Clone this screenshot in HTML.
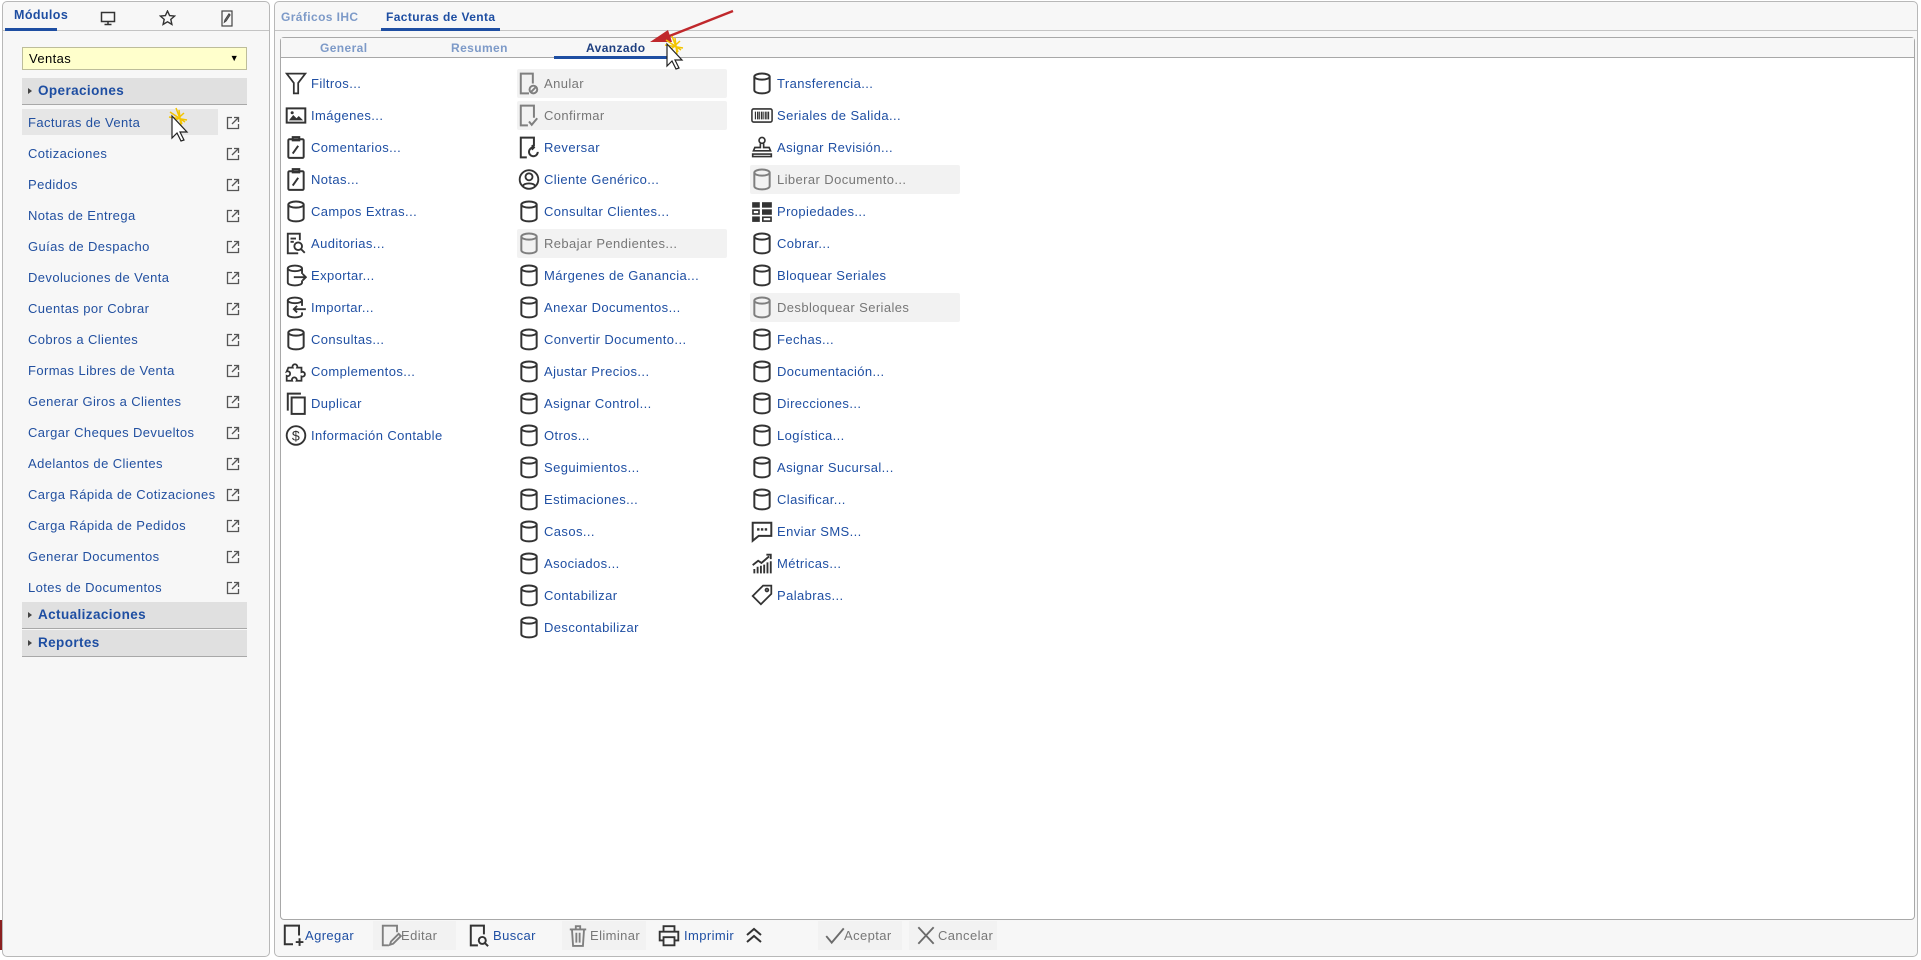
<!DOCTYPE html>
<html><head><meta charset="utf-8"><style>
*{box-sizing:border-box;margin:0;padding:0}
body{width:1921px;height:960px;background:#fff;font-family:"Liberation Sans",sans-serif;font-size:13px;letter-spacing:0.4px;color:#1f4fa3;position:relative;overflow:hidden}
.a{position:absolute}
.lp{left:2px;top:1px;width:268px;height:956px;border:1px solid #b8b8b8;border-radius:5px;background:#f7f7f7}
.rp{left:274px;top:1px;width:1644px;height:956px;border:1px solid #b8b8b8;border-radius:5px;background:#f7f7f7}
.tabline{height:1px;background:#c4c4c4}
.item{position:absolute;left:28px;height:20px;line-height:20px;color:#2250a0}
.ext{position:absolute;left:226px;width:14px;height:14px}
.hdr{position:absolute;left:22px;width:225px;height:27px;background:#e0e0e0;border-bottom:1px solid #a8a8a8;font-weight:bold;color:#1e4ea2;line-height:26px;padding-left:16px;font-size:13.5px}
.hdr:before{content:"";position:absolute;left:6px;top:10px;border-left:4px solid #444;border-top:3.5px solid transparent;border-bottom:3.5px solid transparent}
.op{position:absolute;height:29px;line-height:29px;white-space:nowrap}
.op svg{position:absolute;left:1px;top:3px;width:22px;height:23px}
.op span{position:absolute;left:27px}
.dis{background:#f2f2f2;border-radius:2px;color:#777}
.dis svg{opacity:.6}
.ft{position:absolute;top:921px;height:29px;line-height:29px;white-space:nowrap}
.ft svg{position:absolute;top:3px;width:22px;height:23px}
</style></head><body>
<svg width="0" height="0" style="position:absolute">
<defs>
<symbol id="db" viewBox="0 0 20 21"><g fill="none" stroke="#333" stroke-width="1.8"><ellipse cx="10" cy="4.2" rx="7" ry="2.8"/><path d="M3 4.2v12.5c0 1.6 3.1 2.8 7 2.8s7-1.2 7-2.8V4.2"/></g></symbol>
<symbol id="ext" viewBox="0 0 14 14"><g fill="none" stroke="#555" stroke-width="1.3"><path d="M6 1.5H1.5v11h11V8"/><path d="M8 1.5h4.5V6M12.5 1.5 6 8"/></g></symbol>
</defs></svg>

<!-- LEFT PANEL -->
<div class="a lp"></div>
<div class="a tabline" style="left:3px;top:30px;width:266px"></div>
<div class="a" style="left:14px;top:8px;font-weight:bold;font-size:12.5px;color:#1e4ea2">Módulos</div>
<div class="a" style="left:5px;top:28px;width:52px;height:3px;background:#1e4ea2"></div>
<svg class="a" style="left:100px;top:11px" width="16" height="15" viewBox="0 0 16 15"><g fill="none" stroke="#333" stroke-width="1.5"><rect x="1.5" y="1.5" width="13" height="9"/><path d="M8 10.5v3M4.5 13.5h7"/></g></svg>
<svg class="a" style="left:159px;top:10px" width="17" height="16" viewBox="0 0 17 16"><path d="M8.5 1l2.1 4.6 5 .5-3.8 3.3 1.1 5-4.4-2.6-4.4 2.6 1.1-5L1.4 6.1l5-.5z" fill="none" stroke="#333" stroke-width="1.4"/></svg>
<svg class="a" style="left:221px;top:10px" width="12" height="17" viewBox="0 0 12 17"><g fill="none" stroke="#444" stroke-width="1.2"><rect x="1" y="1" width="10" height="15"/><path d="M8 4 4 10l-.5 2 1.6-1.2L9 5z"/></g></svg>

<div class="a" style="left:22px;top:47px;width:225px;height:23px;background:#ffffcc;border:1px solid #bdbd9a;line-height:21px;padding-left:6px;color:#000;font-size:13px">Ventas<span style="position:absolute;right:7px;top:0;font-size:9px">▼</span></div>
<div class="hdr" style="top:78px">Operaciones</div>
<div class="a" style="left:22px;top:109px;width:196px;height:26px;background:#e6e6e6"></div>
<div class="item" style="top:113px">Facturas de Venta</div>
<div class="item" style="top:144px">Cotizaciones</div>
<div class="item" style="top:175px">Pedidos</div>
<div class="item" style="top:206px">Notas de Entrega</div>
<div class="item" style="top:237px">Guías de Despacho</div>
<div class="item" style="top:268px">Devoluciones de Venta</div>
<div class="item" style="top:299px">Cuentas por Cobrar</div>
<div class="item" style="top:330px">Cobros a Clientes</div>
<div class="item" style="top:361px">Formas Libres de Venta</div>
<div class="item" style="top:392px">Generar Giros a Clientes</div>
<div class="item" style="top:423px">Cargar Cheques Devueltos</div>
<div class="item" style="top:454px">Adelantos de Clientes</div>
<div class="item" style="top:485px;width:192px;overflow:hidden;white-space:nowrap">Carga Rápida de Cotizaciones</div>
<div class="item" style="top:516px">Carga Rápida de Pedidos</div>
<div class="item" style="top:547px">Generar Documentos</div>
<div class="item" style="top:578px">Lotes de Documentos</div>
<svg class="ext" style="top:116px"><use href="#ext"/></svg>
<svg class="ext" style="top:147px"><use href="#ext"/></svg>
<svg class="ext" style="top:178px"><use href="#ext"/></svg>
<svg class="ext" style="top:209px"><use href="#ext"/></svg>
<svg class="ext" style="top:240px"><use href="#ext"/></svg>
<svg class="ext" style="top:271px"><use href="#ext"/></svg>
<svg class="ext" style="top:302px"><use href="#ext"/></svg>
<svg class="ext" style="top:333px"><use href="#ext"/></svg>
<svg class="ext" style="top:364px"><use href="#ext"/></svg>
<svg class="ext" style="top:395px"><use href="#ext"/></svg>
<svg class="ext" style="top:426px"><use href="#ext"/></svg>
<svg class="ext" style="top:457px"><use href="#ext"/></svg>
<svg class="ext" style="top:488px"><use href="#ext"/></svg>
<svg class="ext" style="top:519px"><use href="#ext"/></svg>
<svg class="ext" style="top:550px"><use href="#ext"/></svg>
<svg class="ext" style="top:581px"><use href="#ext"/></svg>
<div class="hdr" style="top:602px">Actualizaciones</div>
<div class="hdr" style="top:630px">Reportes</div>
<div class="a" style="left:0;top:920px;width:2px;height:30px;background:#8b2020"></div>

<!-- RIGHT PANEL -->
<div class="a rp"></div>
<div class="a tabline" style="left:275px;top:30px;width:1642px"></div>
<div class="a" style="left:281px;top:10px;font-weight:bold;font-size:12px;color:#7d9ac8">Gráficos IHC</div>
<div class="a" style="left:386px;top:10px;font-weight:bold;font-size:12px;color:#1e4ea2">Facturas de Venta</div>
<div class="a" style="left:381px;top:28px;width:119px;height:3px;background:#1e4ea2"></div>

<div class="a" style="left:280px;top:37px;width:1635px;height:883px;border:1px solid #a8a8a8;border-radius:4px;background:#fff"></div>
<div class="a" style="left:281px;top:38px;width:1633px;height:20px;background:#f7f7f7;border-bottom:1px solid #a8a8a8"></div>
<div class="a" style="left:320px;top:41px;font-weight:bold;font-size:12px;color:#7d9ac8">General</div>
<div class="a" style="left:451px;top:41px;font-weight:bold;font-size:12px;color:#7d9ac8">Resumen</div>
<div class="a" style="left:586px;top:41px;font-weight:bold;font-size:12px;color:#1e3f80">Avanzado</div>
<div class="a" style="left:554px;top:56px;width:115px;height:3px;background:#1e4ea2"></div>

<!-- column 1 -->
<div class="op" style="left:284px;top:69px"><svg viewBox="0 0 20 21"><path d="M1.5 1.5h17l-6.5 8.5v9.5H8V10z" fill="none" stroke="#333" stroke-width="1.6"/></svg><span>Filtros...</span></div>
<div class="op" style="left:284px;top:101px"><svg viewBox="0 0 20 21"><rect x="1.5" y="4" width="17" height="13" fill="none" stroke="#333" stroke-width="1.8"/><path d="M3.5 15l4-5 3 3 2-2 4 4z" fill="#333"/><circle cx="6.5" cy="8" r="1.4" fill="#333"/></svg><span>Imágenes...</span></div>
<div class="op" style="left:284px;top:133px"><svg viewBox="0 0 20 21"><g fill="none" stroke="#333" stroke-width="1.8"><rect x="3" y="3" width="14" height="17" rx="1"/><rect x="7" y="1" width="6" height="3"/><path d="M7 16l5-7"/></g></svg><span>Comentarios...</span></div>
<div class="op" style="left:284px;top:165px"><svg viewBox="0 0 20 21"><g fill="none" stroke="#333" stroke-width="1.8"><rect x="3" y="3" width="14" height="17" rx="1"/><rect x="7" y="1" width="6" height="3"/><path d="M7 16l5-7"/></g></svg><span>Notas...</span></div>
<div class="op" style="left:284px;top:197px"><svg><use href="#db"/></svg><span>Campos Extras...</span></div>
<div class="op" style="left:284px;top:229px"><svg viewBox="0 0 20 21"><g fill="none" stroke="#333" stroke-width="1.7"><path d="M12 19.5H2.5V1.5h11v6"/><circle cx="12" cy="13" r="3.5"/><path d="M14.5 15.5l3.5 3.5M5 6h5M5 9h3"/></g></svg><span>Auditorias...</span></div>
<div class="op" style="left:284px;top:261px"><svg viewBox="0 0 20 21"><g fill="none" stroke="#333" stroke-width="1.7"><ellipse cx="9" cy="4" rx="6.5" ry="2.6"/><path d="M2.5 4v13c0 1.5 2.9 2.6 6.5 2.6s6.5-1.1 6.5-2.6v-2M15.5 4v5M8 12h11M16 9l3 3-3 3"/></g></svg><span>Exportar...</span></div>
<div class="op" style="left:284px;top:293px"><svg viewBox="0 0 20 21"><g fill="none" stroke="#333" stroke-width="1.7"><ellipse cx="9" cy="4" rx="6.5" ry="2.6"/><path d="M2.5 4v13c0 1.5 2.9 2.6 6.5 2.6s6.5-1.1 6.5-2.6v-2M15.5 4v5M8 12h11M11 9l-3 3 3 3"/></g></svg><span>Importar...</span></div>
<div class="op" style="left:284px;top:325px"><svg><use href="#db"/></svg><span>Consultas...</span></div>
<div class="op" style="left:284px;top:357px"><svg viewBox="0 0 20 21"><path d="M3 7h4a2.2 2.2 0 1 1 4 0h4v4a2.2 2.2 0 1 1 0 4v4h-4.5a2.2 2.2 0 1 0-4 0H1.5v-4.5a2.2 2.2 0 1 0 0-4z" fill="none" stroke="#333" stroke-width="1.6"/></svg><span>Complementos...</span></div>
<div class="op" style="left:284px;top:389px"><svg viewBox="0 0 20 21"><g fill="none" stroke="#333" stroke-width="1.8"><path d="M2.5 17V1.5h12"/><rect x="6" y="5" width="12" height="15"/></g></svg><span>Duplicar</span></div>
<div class="op" style="left:284px;top:421px"><svg viewBox="0 0 20 21"><circle cx="10" cy="10.5" r="8.5" fill="none" stroke="#333" stroke-width="1.7"/><text x="10" y="15" font-size="13" font-family="Liberation Sans" text-anchor="middle" fill="#333">$</text></svg><span>Información Contable</span></div>

<!-- column 2 -->
<div class="op dis" style="left:517px;top:69px;width:210px"><svg viewBox="0 0 20 21"><g fill="none" stroke="#333" stroke-width="1.8"><path d="M10 19.5H2.5V1.5h11v9"/><circle cx="14" cy="16" r="3.5"/><path d="M11.5 18.5l5-5"/></g></svg><span>Anular</span></div>
<div class="op dis" style="left:517px;top:101px;width:210px"><svg viewBox="0 0 20 21"><g fill="none" stroke="#333" stroke-width="1.8"><path d="M9 19.5H2.5V1.5h12v11"/><path d="M10 16l2.5 3 5-6"/></g></svg><span>Confirmar</span></div>
<div class="op" style="left:517px;top:133px"><svg viewBox="0 0 20 21"><g fill="none" stroke="#333" stroke-width="1.8"><path d="M8 19.5H2.5V1.5h12v8"/><path d="M18 14.5a4 4 0 1 1-4-4"/><path d="M12.5 8.5l2 2-2 2"/></g></svg><span>Reversar</span></div>
<div class="op" style="left:517px;top:165px"><svg viewBox="0 0 20 21"><g fill="none" stroke="#333" stroke-width="1.7"><circle cx="10" cy="10.5" r="8.5"/><circle cx="10" cy="8" r="3.2"/><path d="M4.3 16.5c1.5-3.2 9.9-3.2 11.4 0"/></g></svg><span>Cliente Genérico...</span></div>
<div class="op" style="left:517px;top:197px"><svg><use href="#db"/></svg><span>Consultar Clientes...</span></div>
<div class="op dis" style="left:517px;top:229px;width:210px"><svg><use href="#db"/></svg><span>Rebajar Pendientes...</span></div>
<div class="op" style="left:517px;top:261px"><svg><use href="#db"/></svg><span>Márgenes de Ganancia...</span></div>
<div class="op" style="left:517px;top:293px"><svg><use href="#db"/></svg><span>Anexar Documentos...</span></div>
<div class="op" style="left:517px;top:325px"><svg><use href="#db"/></svg><span>Convertir Documento...</span></div>
<div class="op" style="left:517px;top:357px"><svg><use href="#db"/></svg><span>Ajustar Precios...</span></div>
<div class="op" style="left:517px;top:389px"><svg><use href="#db"/></svg><span>Asignar Control...</span></div>
<div class="op" style="left:517px;top:421px"><svg><use href="#db"/></svg><span>Otros...</span></div>
<div class="op" style="left:517px;top:453px"><svg><use href="#db"/></svg><span>Seguimientos...</span></div>
<div class="op" style="left:517px;top:485px"><svg><use href="#db"/></svg><span>Estimaciones...</span></div>
<div class="op" style="left:517px;top:517px"><svg><use href="#db"/></svg><span>Casos...</span></div>
<div class="op" style="left:517px;top:549px"><svg><use href="#db"/></svg><span>Asociados...</span></div>
<div class="op" style="left:517px;top:581px"><svg><use href="#db"/></svg><span>Contabilizar</span></div>
<div class="op" style="left:517px;top:613px"><svg><use href="#db"/></svg><span>Descontabilizar</span></div>

<!-- column 3 -->
<div class="op" style="left:750px;top:69px"><svg><use href="#db"/></svg><span>Transferencia...</span></div>
<div class="op" style="left:750px;top:101px"><svg viewBox="0 0 20 21"><rect x="0.8" y="4.5" width="18.4" height="12" rx="1.5" fill="none" stroke="#333" stroke-width="1.4"/><path d="M4 7v7M6 7v7M7.5 7v7M9.5 7v7M11 7v7M13 7v7M14.5 7v7M16 7v7" stroke="#333" stroke-width="1.1"/></svg><span>Seriales de Salida...</span></div>
<div class="op" style="left:750px;top:133px"><svg viewBox="0 0 20 21"><g fill="none" stroke="#333" stroke-width="1.5"><circle cx="10" cy="4" r="2.7"/><path d="M8.5 6.7v3.8h-5l-1.3 3h15.6l-1.3-3h-5V6.7M1.5 16.5h17v2.3h-17z"/></g></svg><span>Asignar Revisión...</span></div>
<div class="op dis" style="left:750px;top:165px;width:210px"><svg><use href="#db"/></svg><span>Liberar Documento...</span></div>
<div class="op" style="left:750px;top:197px"><svg viewBox="0 0 20 21"><g fill="#333"><rect x="1" y="2" width="7" height="5"/><rect x="10" y="2" width="9" height="5"/><rect x="1" y="8.5" width="7" height="5"/><rect x="10" y="8.5" width="9" height="5"/><rect x="1" y="15" width="7" height="5"/><rect x="10" y="15" width="9" height="5"/></g><g fill="#fff"><rect x="2.5" y="10" width="4" height="2"/><rect x="11.5" y="16.5" width="6" height="2"/></g></svg><span>Propiedades...</span></div>
<div class="op" style="left:750px;top:229px"><svg><use href="#db"/></svg><span>Cobrar...</span></div>
<div class="op" style="left:750px;top:261px"><svg><use href="#db"/></svg><span>Bloquear Seriales</span></div>
<div class="op dis" style="left:750px;top:293px;width:210px"><svg><use href="#db"/></svg><span>Desbloquear Seriales</span></div>
<div class="op" style="left:750px;top:325px"><svg><use href="#db"/></svg><span>Fechas...</span></div>
<div class="op" style="left:750px;top:357px"><svg><use href="#db"/></svg><span>Documentación...</span></div>
<div class="op" style="left:750px;top:389px"><svg><use href="#db"/></svg><span>Direcciones...</span></div>
<div class="op" style="left:750px;top:421px"><svg><use href="#db"/></svg><span>Logística...</span></div>
<div class="op" style="left:750px;top:453px"><svg><use href="#db"/></svg><span>Asignar Sucursal...</span></div>
<div class="op" style="left:750px;top:485px"><svg><use href="#db"/></svg><span>Clasificar...</span></div>
<div class="op" style="left:750px;top:517px"><svg viewBox="0 0 20 21"><path d="M1.5 2.5h17v12H7l-5.5 4.5z" fill="none" stroke="#333" stroke-width="1.8"/><g fill="#333"><rect x="5.5" y="7.5" width="2.2" height="2.2"/><rect x="9" y="7.5" width="2.2" height="2.2"/><rect x="12.5" y="7.5" width="2.2" height="2.2"/></g></svg><span>Enviar SMS...</span></div>
<div class="op" style="left:750px;top:549px"><svg viewBox="0 0 20 21"><g stroke="#333" stroke-width="1.7"><path d="M3 19.5v-4M6 19.5v-6M9 19.5v-7M12 19.5v-8M15 19.5v-10M18 19.5v-11"/><path d="M1.5 12l5-4 3 2 7-6" fill="none"/><path d="M14 2.5h4v4" fill="none"/></g></svg><span>Métricas...</span></div>
<div class="op" style="left:750px;top:581px"><svg viewBox="0 0 20 21"><g fill="none" stroke="#333" stroke-width="1.6"><path d="M11 1.5h7.5V9l-9.5 9.5-7.5-7.5z"/><circle cx="14.5" cy="5.5" r="1.3"/></g></svg><span>Palabras...</span></div>

<!-- footer -->
<div class="ft" style="left:282px"><svg style="left:0" viewBox="0 0 20 21"><g fill="none" stroke="#333" stroke-width="1.8"><path d="M10 18.5H2.5V1.5h13v9"/><path d="M16 13v7M12.5 16.5h7"/></g></svg><span style="position:absolute;left:23px">Agregar</span></div>
<div class="ft" style="left:373px;width:83px;background:#f2f2f2;color:#777"><svg style="left:7px;opacity:.6" viewBox="0 0 20 21"><g fill="none" stroke="#333" stroke-width="1.7"><path d="M8 19.5H2.5V1.5h13v6"/><path d="M9 19l1-3 7-7 2 2-7 7z"/></g></svg><span style="position:absolute;left:28px">Editar</span></div>
<div class="ft" style="left:468px"><svg style="left:0" viewBox="0 0 20 21"><g fill="none" stroke="#333" stroke-width="1.8"><path d="M9 19.5H2.5V1.5h12v8"/><circle cx="13" cy="15" r="3.2"/><path d="M15.3 17.3l3 3"/></g></svg><span style="position:absolute;left:25px">Buscar</span></div>
<div class="ft" style="left:562px;width:84px;background:#f2f2f2;color:#777"><svg style="left:5px;opacity:.6" viewBox="0 0 20 21"><g fill="none" stroke="#333" stroke-width="1.7"><path d="M2.5 5h15M8 5V2h4v3M4.5 5l1 15h9l1-15M8.5 8v9M11.5 8v9"/></g></svg><span style="position:absolute;left:28px">Eliminar</span></div>
<div class="ft" style="left:658px"><svg style="left:0" viewBox="0 0 20 21"><g fill="none" stroke="#333" stroke-width="1.7"><path d="M5 7V2h10v5M5 15H1.5V7h17v8H15M5 12h10v7.5H5z"/></g></svg><span style="position:absolute;left:26px">Imprimir</span></div>
<svg class="a" style="left:744px;top:925px" width="20" height="20" viewBox="0 0 20 20"><g fill="none" stroke="#333" stroke-width="2"><path d="M3 10l7-6 7 6M3 17l7-6 7 6"/></g></svg>
<div class="ft" style="left:818px;width:84px;background:#f2f2f2;color:#777"><svg style="left:6px;opacity:.7" viewBox="0 0 20 21"><path d="M2 11l5 6L18 4" fill="none" stroke="#333" stroke-width="1.7"/></svg><span style="position:absolute;left:26px">Aceptar</span></div>
<div class="ft" style="left:909px;width:88px;background:#f2f2f2;color:#777"><svg style="left:6px;opacity:.7" viewBox="0 0 20 21"><path d="M3 3l14 15M17 3L3 18" fill="none" stroke="#333" stroke-width="1.7"/></svg><span style="position:absolute;left:29px">Cancelar</span></div>

<!-- annotations -->
<svg class="a" style="left:0;top:0" width="1921" height="960">
<path d="M733 11 L667 37" stroke="#c0282c" stroke-width="2.5"/>
<path d="M650 42 L668 30 L672 42z" fill="#c0282c"/>
<g stroke="#f3c400" stroke-width="1.5"><path d="M672 36l6 16M665 45l18 3M668 52l12-11M675 38l2 16M666 40l15 10"/></g>
<path d="M667 44l0 22 5-5 4 8 3-1-4-8 7 0z" fill="#fff" stroke="#222" stroke-width="1.2"/>
<g stroke="#f3c400" stroke-width="1.5"><path d="M176 108l6 16M169 117l18 3M172 124l12-11M179 110l2 16M170 112l15 10"/></g>
<path d="M172 116l0 22 5-5 4 8 3-1-4-8 7 0z" fill="#fff" stroke="#222" stroke-width="1.2"/>
</svg>
</body></html>
